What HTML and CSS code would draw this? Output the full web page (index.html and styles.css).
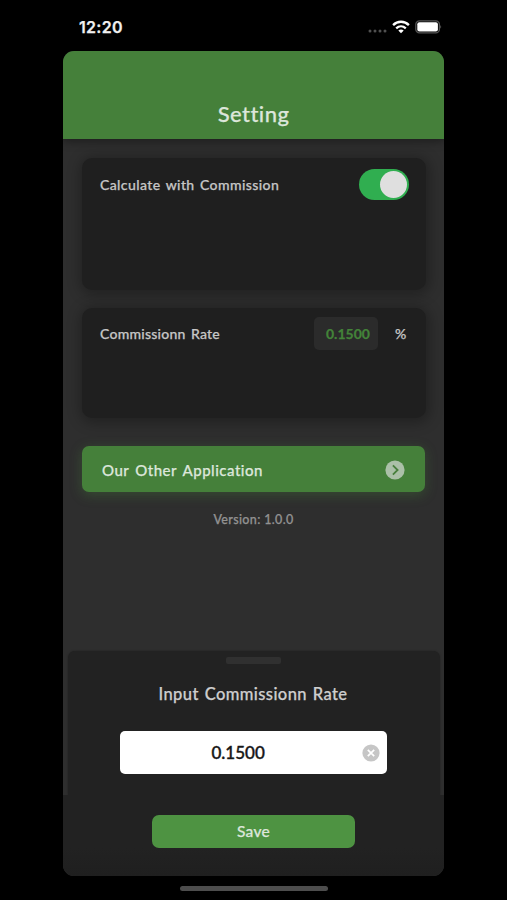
FILE: index.html
```
<!DOCTYPE html>
<html lang="en">
<head>
<meta charset="utf-8">
<title>Setting</title>
<link rel="stylesheet" href="styles.css">
</head>
<body>
<div class="status">
  <span class="time">12:20</span>
  <div class="indicators">
    <svg class="dots" width="20" height="4" viewBox="0 0 20 4" fill="#505050"><circle cx="2" cy="2" r="1.5"/><circle cx="7" cy="2" r="1.5"/><circle cx="12" cy="2" r="1.5"/><circle cx="17" cy="2" r="1.5"/></svg>
    <svg class="wifi" width="18" height="14" viewBox="0 0 18 14" fill="none" stroke="#fff" stroke-width="2.3"><path d="M1.1 5.1C5.5.6 12.5.6 16.900 5.100"/><path d="M4.200 8.300C7 5.700 11 5.700 13.800 8.300"/><path d="M9 13.300L6.300 10.600C7.800 9.200 10.200 9.200 11.700 10.600Z" fill="#fff" stroke="none"/></svg>
    <svg class="battery" width="27" height="14" viewBox="0 0 27 14"><rect x=".8" y=".8" width="23.600" height="12" rx="3.600" fill="none" stroke="#555" stroke-width="1.300"/><rect x="2.300" y="2.200" width="20.600" height="9.200" rx="2" fill="#fff"/><path d="M25.300 4.800Q27 6.800 25.300 8.800Z" fill="#666"/></svg>
  </div>
</div>
<main class="screen">
  <header class="header"><h1>Setting</h1></header>
  <section class="content">
    <div class="card card-toggle">
      <div class="row"><span class="label l-calc">Calculate with Commission</span><span class="switch"><span class="knob"></span></span></div>
    </div>
    <div class="card card-rate">
      <div class="row"><span class="label l-rate">Commissionn Rate</span><span class="rate">0.1500</span><span class="percent">%</span></div>
    </div>
    <div class="other">
      <span class="l-other">Our Other Application</span>
      <svg width="20" height="20" viewBox="0 0 20 20"><circle cx="10" cy="10" r="9.600" fill="#abc0a8"/><path d="M7.900 5.400L12.600 10L7.900 14.600" fill="none" stroke="#487f3c" stroke-width="1.800"/></svg>
    </div>
    <p class="version">Version: 1.0.0</p>
  </section>
  <section class="sheet">
    <div class="sheet-top">
      <div class="grip"></div>
      <h2>Input Commissionn Rate</h2>
      <div class="field">
        <span class="value">0.1500</span>
        <svg class="clear" width="18" height="18" viewBox="0 0 18 18"><circle cx="9" cy="9" r="8.600" fill="#c6c6c6"/><path d="M5.800 5.800L12.200 12.200M12.200 5.800L5.800 12.200" stroke="#fff" stroke-width="1.700"/></svg>
      </div>
    </div>
    <div class="sheet-bottom"><div class="save"><span>Save</span></div></div>
  </section>
</main>
<div class="home"></div>
</body>
</html>
```
FILE: styles.css
```
* { box-sizing: border-box; }
body {
  margin: 0;
  width: 507px;
  height: 900px;
  overflow: hidden;
  background: #000;
  font-family: Lato, "Liberation Sans", sans-serif;
  font-weight: 500;
  color: #c6c6c6;
  -webkit-text-stroke: .25px currentColor;
}
h1, h2, p { margin: 0; font-weight: 500; }
svg { display: block; flex: none; }
span { white-space: nowrap; }
.status {
  height: 51px;
  padding: 3px 65px 0 79px;
  display: flex;
  align-items: center;
  justify-content: space-between;
}
.time { font: 600 16px/20px Inter, sans-serif; letter-spacing: .3px; color: #f0f0f0; }
.indicators { display: flex; align-items: center; }
.dots { margin: 8px 4px 0 0; }
.wifi { margin-right: 5px; }
.screen {
  width: 381px;
  height: 825px;
  margin-left: 63px;
  border-radius: 11px;
  overflow: hidden;
  display: flex;
  flex-direction: column;
  background: #2e2e2e;
}
.header {
  height: 88px;
  padding-bottom: 12px;
  display: flex;
  align-items: flex-end;
  justify-content: center;
  background: #45803a;
  box-shadow: 0 2px 9px rgba(0, 0, 0, .4);
  z-index: 1;
}
h1 { font-size: 22px; line-height: 26px; letter-spacing: .45px; color: #dce6da; }
.content { height: 512px; padding: 19px 19px 0; }
.card {
  width: 344px;
  border-radius: 10px;
  background: #1f1f1f;
  padding: 9px 17px 0 18px;
  box-shadow: 1px 2px 13px 3px rgba(0, 0, 0, .28);
}
.card-toggle { height: 132px; }
.card-rate { height: 110px; margin-top: 18px; padding-top: 8px; padding-right: 16px; }
.row { height: 34px; display: flex; align-items: center; }
.label { font-size: 14px; flex: 1; word-spacing: 1.5px; }
.l-calc { letter-spacing: .4px; }
.l-rate { letter-spacing: .25px; }
.switch {
  width: 50px;
  height: 31px;
  padding: 2px;
  border-radius: 16px;
  background: #30ae50;
  display: flex;
  justify-content: flex-end;
}
.knob { width: 27px; height: 27px; border-radius: 50%; background: #dfdfdf; }
.rate {
  width: 64px;
  height: 33px;
  border-radius: 5px;
  background: #2b2b2b;
  color: #438339;
  font-size: 14px;
  font-weight: 700;
  line-height: 33px;
  padding-left: 12px;
}
.percent { width: 31px; padding-left: 17px; margin-right: 1px; font-size: 14px; }
.other {
  width: 343px;
  height: 46px;
  margin-top: 28px;
  padding: 1px 20px 0;
  border-radius: 7px;
  background: #45803a;
  box-shadow: 0 3px 12px 1px rgba(69, 128, 58, .33);
  display: flex;
  align-items: center;
  justify-content: space-between;
  font-size: 15px;
  color: #dce6da;
}
.l-other { letter-spacing: .5px; word-spacing: 2px; }
.version { margin-top: 20px; text-align: center; font-size: 12.5px; line-height: 16px; letter-spacing: .35px; color: #929292; }
.sheet { height: 225px; }
.sheet-top {
  height: 144px;
  margin: 0 4px 0 5px;
  padding: 6px 2px 0 0;
  border-radius: 7px 7px 0 0;
  background: #222;
  box-shadow: 0 0 2px rgba(0, 0, 0, .35);
  display: flex;
  flex-direction: column;
  align-items: center;
}
.grip { width: 55px; height: 7px; border-radius: 2px; background: #303030; }
h2 { margin-top: 19px; font-size: 16.5px; line-height: 22px; letter-spacing: .42px; word-spacing: 1.2px; color: #cecece; }
.field {
  width: 267px;
  height: 43px;
  margin-top: 26px;
  padding: 0 7px 0 92px;
  border-radius: 5px;
  background: #fff;
  display: flex;
  align-items: center;
  justify-content: space-between;
  color: #171717;
  font-size: 17px;
  -webkit-text-stroke-width: .4px;
}
.sheet-bottom { height: 81px; padding: 20px 0 0 89px; background: linear-gradient(#222 65%, #1f1f1f); }
.save {
  width: 203px;
  height: 33px;
  padding-bottom: 1px;
  border-radius: 7px;
  background: #4e9342;
  display: flex;
  align-items: center;
  justify-content: center;
  font-size: 15.5px;
  letter-spacing: .3px;
  color: #dce6da;
}
.home { width: 148px; height: 5px; margin: 10px 0 0 180px; border-radius: 3px; background: #4d4d4d; }
```
